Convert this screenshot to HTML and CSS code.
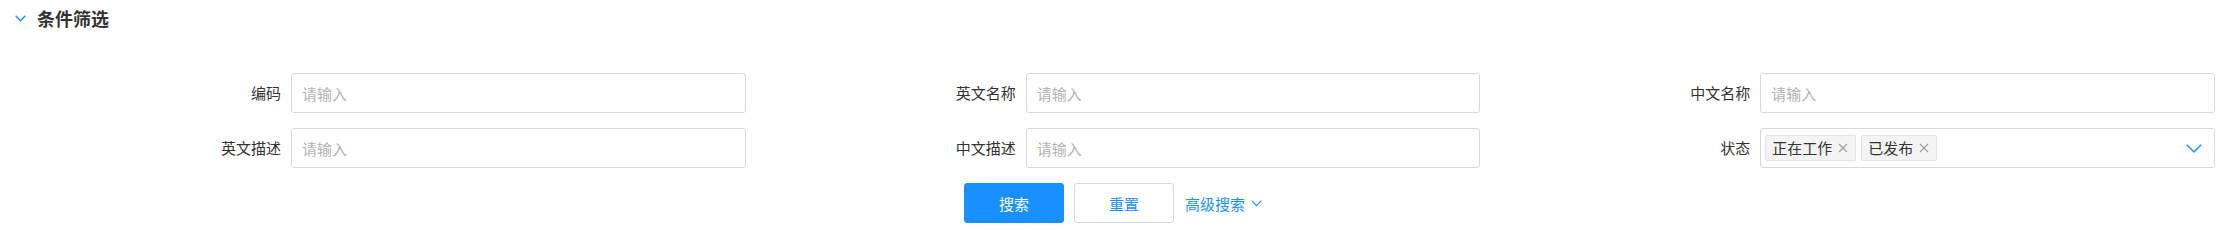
FILE: index.html
```html
<!DOCTYPE html>
<html lang="zh-CN">
<head>
<meta charset="utf-8">
<title>条件筛选</title>
<link rel="stylesheet" href="styles.css">
</head>
<body>
<div class="panel">
  <div class="panel-header">
    <svg class="header-arrow" width="11" height="7" viewBox="0 0 11 7"><path d="M0.7 0.7 L5.5 5.7 L10.3 0.7" fill="none" stroke="#1890ff" stroke-width="1.3"/></svg>
    <span class="panel-title">条件筛选</span>
  </div>
  <div class="form">
    <div class="grid">
      <div class="field">
        <label class="field-label">编码</label>
        <div class="input"><span class="placeholder">请输入</span></div>
      </div>
      <div class="field">
        <label class="field-label">英文名称</label>
        <div class="input"><span class="placeholder">请输入</span></div>
      </div>
      <div class="field">
        <label class="field-label">中文名称</label>
        <div class="input"><span class="placeholder">请输入</span></div>
      </div>
      <div class="field">
        <label class="field-label">英文描述</label>
        <div class="input"><span class="placeholder">请输入</span></div>
      </div>
      <div class="field">
        <label class="field-label">中文描述</label>
        <div class="input"><span class="placeholder">请输入</span></div>
      </div>
      <div class="field">
        <label class="field-label">状态</label>
        <div class="input select">
          <span class="tag">正在工作<svg class="tag-close" width="10" height="10" viewBox="0 0 10 10"><path d="M1 1 L9 9 M9 1 L1 9" stroke="#a0a0a0" stroke-width="1.2" fill="none"/></svg></span>
          <span class="tag">已发布<svg class="tag-close" width="10" height="10" viewBox="0 0 10 10"><path d="M1 1 L9 9 M9 1 L1 9" stroke="#a0a0a0" stroke-width="1.2" fill="none"/></svg></span>
          <svg class="select-arrow" width="16" height="9" viewBox="0 0 16 9"><path d="M0.8 0.8 L8 8 L15.2 0.8" fill="none" stroke="#1890ff" stroke-width="1.4"/></svg>
        </div>
      </div>
    </div>
    <div class="actions">
      <button class="btn btn-primary">搜索</button>
      <button class="btn btn-default">重置</button>
      <a class="advanced">高级搜索<svg class="adv-arrow" width="11" height="7" viewBox="0 0 11 7"><path d="M0.7 0.7 L5.5 5.7 L10.3 0.7" fill="none" stroke="#1890ff" stroke-width="1.1"/></svg></a>
    </div>
  </div>
</div>
</body>
</html>
```
FILE: styles.css
```css
html, body {
  margin: 0;
  padding: 0;
  background: #ffffff;
}
body {
  font-family: "Noto Sans CJK SC", "Noto Sans", "Liberation Sans", sans-serif;
  color: #333333;
}
.panel {
  width: 2233px;
  height: 246px;
}
.panel-header {
  height: 36px;
  display: flex;
  align-items: center;
  padding-left: 15px;
}
.header-arrow {
  display: block;
  margin-right: 11px;
  margin-top: 0px;
}
.panel-title {
  font-size: 18px;
  font-weight: 700;
  line-height: 36px;
  color: #333333;
}
.form {
  margin-top: 37px;
  padding: 0 18px 0 11px;
}
.grid {
  display: grid;
  grid-template-columns: repeat(3, 1fr);
  row-gap: 15px;
}
.field {
  display: flex;
  align-items: center;
  height: 40px;
}
.field-label {
  width: 270px;
  padding-right: 10px;
  text-align: right;
  font-size: 15px;
  line-height: 40px;
  color: #333333;
}
.input {
  flex: 1;
  height: 40px;
  box-sizing: border-box;
  border: 1px solid #d9d9d9;
  border-radius: 3px;
  display: flex;
  align-items: center;
  padding: 0 10px;
  font-size: 15px;
}
.placeholder {
  color: #b3b3b3;
}
.select {
  padding: 0 12px 0 4px;
  gap: 5px;
}
.tag {
  display: inline-flex;
  align-items: center;
  height: 26px;
  box-sizing: border-box;
  padding: 0 7px 0 6px;
  background: #f4f4f4;
  border: 1px solid #e4e4e4;
  border-radius: 2px;
  font-size: 15px;
  color: #333333;
  line-height: 24px;
}
.tag-close {
  display: block;
  margin-left: 6px;
}
.select-arrow {
  display: block;
  margin-left: auto;
  margin-top: 1px;
}
.actions {
  margin-top: 15px;
  display: flex;
  justify-content: center;
  align-items: center;
  gap: 10px;
}
.btn {
  width: 100px;
  height: 40px;
  box-sizing: border-box;
  border-radius: 3px;
  font-family: inherit;
  font-size: 15px;
  padding: 0;
  cursor: pointer;
}
.btn-primary {
  background: #1890ff;
  border: 1px solid #1890ff;
  color: #ffffff;
}
.btn-default {
  background: #ffffff;
  border: 1px solid #d9d9d9;
  color: #1890ff;
}
.advanced {
  display: inline-flex;
  align-items: center;
  font-size: 15px;
  color: #1890ff;
  margin-left: 1px;
}
.adv-arrow {
  display: block;
  margin-left: 6px;
}
```
